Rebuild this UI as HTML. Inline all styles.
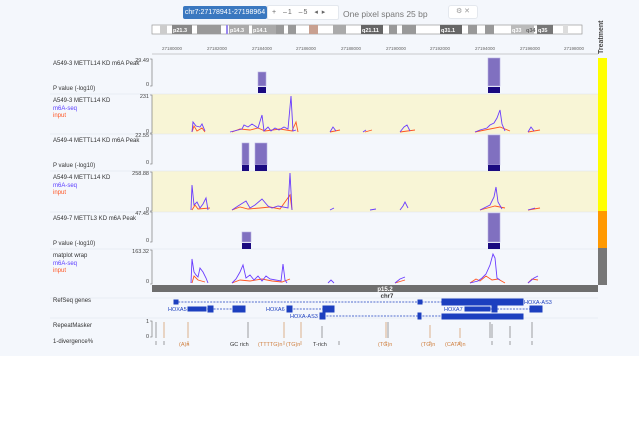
<!DOCTYPE html>
<html><head><meta charset="utf-8"><style>
*{margin:0;padding:0;box-sizing:border-box}
body{width:639px;height:426px;background:#fff;font-family:"Liberation Sans",sans-serif;position:relative;overflow:hidden}
#bg{position:absolute;left:0;top:0;width:639px;height:356px;background:#f4f7fc}
.t{position:absolute;font-size:6px;color:#333;white-space:nowrap}
svg{position:absolute;left:0;top:0}
</style></head><body>
<div id="bg"></div>
<div style="position:absolute;left:183px;top:6px;width:84px;height:13px;background:#3a78c0;border-radius:2px;color:#fff;font-size:7px;line-height:13px;text-align:center">chr7:27178941-27198964</div>
<div style="position:absolute;left:267px;top:5px;width:72px;height:15px;background:#fff;border:1px solid #e4e8ee;border-radius:2px;font-size:7px;color:#666;line-height:13px;padding-left:4px;letter-spacing:1px">+ &nbsp;–1 &nbsp;–5 &nbsp;◂ ▸</div>
<div class="t" style="left:343px;top:9px;font-size:8.5px;color:#777">One pixel spans 25 bp</div>
<div style="position:absolute;left:448px;top:5px;width:30px;height:14px;background:#fff;border:1px solid #e4e8ee;border-radius:3px;font-size:7px;color:#999;line-height:12px;text-align:center">⚙ ✕</div>
<div class="t" style="left:598px;top:16px;font-size:7px;font-weight:bold;color:#444;transform:rotate(-90deg);transform-origin:left top;top:54px">Treatment</div>
<svg width="639" height="426">
<!-- ideogram -->
<rect x="152" y="25" width="430" height="9" fill="#fff" stroke="#999" stroke-width="0.7"/>
<g fill="#999"><rect x="160" y="25" width="7" height="9" fill="#ccc"/><rect x="172" y="25" width="20" height="9" fill="#888"/><rect x="197" y="25" width="24" height="9"/><rect x="226" y="25" width="2" height="9" fill="#9988ee"/><rect x="229" y="25" width="20" height="9" fill="#aaa"/><rect x="252" y="25" width="24" height="9" fill="#aaa"/><rect x="276" y="25" width="8" height="9"/><rect x="288" y="25" width="8" height="9"/><rect x="309" y="25" width="9" height="9" fill="#c8a090"/><rect x="333" y="25" width="13" height="9" fill="#aaa"/><rect x="361" y="25" width="22" height="9" fill="#666"/><rect x="389" y="25" width="8" height="9"/><rect x="402" y="25" width="14" height="9"/><rect x="440" y="25" width="22" height="9" fill="#666"/><rect x="468" y="25" width="9" height="9"/><rect x="485" y="25" width="9" height="9"/><rect x="511" y="25" width="23" height="9" fill="#bbb"/><rect x="537" y="25" width="16" height="9" fill="#777"/><rect x="563" y="25" width="5" height="9" fill="#ddd"/></g>
<g font-size="5.5" fill="#fff" font-weight="bold" font-family="Liberation Sans"><text x="173" y="32">p21.3</text><text x="230" y="32">p14.3</text><text x="253" y="32">p14.1</text><text x="362" y="32">q21.11</text><text x="441" y="32">q31.1</text><text x="512" y="32">q33</text><text x="526" y="32" fill="#666">q34</text><text x="538" y="32">q35</text></g>
<!-- ruler -->
<line x1="152" y1="54" x2="598" y2="54" stroke="#999" stroke-width="0.6"/>
<g font-size="4.5" fill="#666" font-family="Liberation Sans">
<text x="162" y="50">27180000</text><text x="207" y="50">27182000</text><text x="252" y="50">27184000</text><text x="296" y="50">27186000</text><text x="341" y="50">27188000</text><text x="386" y="50">27190000</text><text x="430" y="50">27192000</text><text x="475" y="50">27194000</text><text x="520" y="50">27196000</text><text x="564" y="50">27198000</text></g>
<!-- rows -->
<rect x="152" y="94" width="446" height="40" fill="#f8f5d6"/>
<rect x="152" y="171" width="446" height="41" fill="#f8f5d6"/>
<g stroke="#dde2ea" stroke-width="0.6"><line x1="50" y1="94" x2="598" y2="94"/><line x1="50" y1="134" x2="598" y2="134"/><line x1="50" y1="171" x2="598" y2="171"/><line x1="50" y1="212" x2="598" y2="212"/><line x1="50" y1="249" x2="598" y2="249"/></g>
<!-- treatment -->
<rect x="598" y="58" width="9" height="153" fill="#ffff00"/><rect x="598" y="211" width="9" height="37" fill="#ff9900"/><rect x="598" y="248" width="9" height="37" fill="#777"/>
<!-- axes -->
<g stroke="#666" stroke-width="0.6" fill="none"><path d="M150 59h2v27h-2"/><path d="M150 95h2v38h-2"/><path d="M150 134h2v30h-2"/><path d="M150 172h2v39h-2"/><path d="M150 212h2v30h-2"/><path d="M150 250h2v34h-2"/></g>
<g font-size="5.5" fill="#444" font-family="Liberation Sans" text-anchor="end"><text x="149" y="62">29.49</text><text x="149" y="86">0</text><text x="149" y="98">231</text><text x="149" y="133">0</text><text x="149" y="137">22.55</text><text x="149" y="164">0</text><text x="149" y="175">258.88</text><text x="149" y="211">0</text><text x="149" y="215">47.45</text><text x="149" y="242">0</text><text x="149" y="253">163.32</text><text x="149" y="283">0</text></g>
<!-- peaks -->
<g fill="#8070c0" stroke="#b8b0e0" stroke-width="0.6"><rect x="258" y="72" width="8" height="14"/><rect x="488" y="58" width="12" height="28"/><rect x="242" y="143" width="7" height="22"/><rect x="255" y="143" width="12" height="22"/><rect x="488" y="135" width="12" height="30"/><rect x="242" y="232" width="9" height="10"/><rect x="488" y="213" width="12" height="29"/></g>
<g fill="#1a0a80"><rect x="258" y="87" width="8" height="6"/><rect x="488" y="87" width="12" height="6"/><rect x="242" y="165" width="7" height="6"/><rect x="255" y="165" width="12" height="6"/><rect x="488" y="165" width="12" height="6"/><rect x="242" y="243" width="9" height="6"/><rect x="488" y="243" width="12" height="6"/></g>
<!-- coverage -->
<g fill="none" stroke-width="0.9">
<path stroke="#ff5522" d="M192 132 194 126 197 131 202 128 205 132 M232 132 240 129 250 130 258 128 265 131 280 129 292 131 296 122 298 132 M330 132 340 130 M365 132 372 130 M400 132 415 130 M445 132 M475 132 490 129 500 127 510 131 M528 132 540 130"/>
<path stroke="#6a3cff" d="M192 132 193 122 196 126 200 127 202 124 205 131 M230 132 242 129 244 125 248 127 252 124 258 128 262 115 264 131 268 127 271 131 275 128 279 130 284 127 288 129 291 96 293 131 296 130 M330 132 333 127 336 131 M363 132 366 130 M390 132 M400 132 404 127 407 125 410 131 M452 132 M475 132 480 130 487 128 490 125 494 123 497 118 500 110 502 124 505 131 M528 132 531 127 534 131 M560 132"/>
<path stroke="#ff5522" d="M192 210 195 205 198 209 210 208 M232 210 240 207 248 209 260 208 270 207 280 209 290 195 292 210 M480 210 495 206 505 208 M528 210 540 208"/>
<path stroke="#6a3cff" d="M191 210 192 185 194 205 197 202 200 208 203 204 206 198 208 210 M232 210 238 206 246 201 250 208 255 205 262 199 268 206 272 208 278 206 288 208 290 173 292 210 M330 210 334 208 M370 210 376 209 M400 210 403 206 405 202 408 208 M480 210 490 205 494 197 496 187 498 202 502 209 M528 210 535 208"/>
<path stroke="#ff5522" d="M192 283 194 276 198 280 205 282 M232 283 240 280 250 281 262 279 272 281 282 282 290 279 M388 283 M395 283 405 280 M470 283 476 279 480 281 486 276 492 280 498 279 505 283 M528 283 532 279 538 280"/>
<path stroke="#6a3cff" d="M191 283 192 259 194 272 196 275 198 277 200 268 203 272 206 278 208 283 M232 283 236 279 240 272 243 265 246 278 250 275 254 280 258 276 262 281 266 276 270 279 281 281 283 264 285 280 287 283 M328 283 331 280 334 283 M395 283 400 279 405 277 M470 283 478 281 482 278 486 274 490 265 493 254 495 258 497 278 500 280 M528 283 534 278 538 276"/>
</g>
<!-- chromosome band -->
<rect x="152" y="285" width="446" height="7" fill="#6e6e6e"/>
<text x="385" y="291" font-size="6" fill="#fff" font-weight="bold" font-family="Liberation Sans" text-anchor="middle">p15.2</text>
<text x="387" y="298" font-size="6" fill="#333" font-weight="bold" font-family="Liberation Sans" text-anchor="middle">chr7</text>
<line x1="50" y1="298" x2="598" y2="298" stroke="#dde2ea" stroke-width="0.6"/>
<line x1="50" y1="318" x2="598" y2="318" stroke="#dde2ea" stroke-width="0.6"/>
<!-- genes -->
<g stroke="#1c3fbf" fill="#1c3fbf">
<line x1="175" y1="302" x2="523" y2="302" stroke-width="0.7" stroke-dasharray="2,1.2"/>
<rect x="174" y="300" width="4" height="4"/><rect x="418" y="300" width="4" height="4"/><rect x="442" y="299" width="81" height="6"/>
<line x1="188" y1="309" x2="245" y2="309" stroke-width="0.7" stroke-dasharray="2,1.2"/><rect x="188" y="307" width="18" height="4"/><rect x="208" y="306" width="5" height="6"/><rect x="233" y="306" width="12" height="6"/>
<line x1="287" y1="309" x2="335" y2="309" stroke-width="0.7" stroke-dasharray="2,1.2"/><rect x="287" y="306" width="5" height="6"/><rect x="323" y="306" width="11" height="6"/>
<line x1="465" y1="309" x2="542" y2="309" stroke-width="0.7" stroke-dasharray="2,1.2"/><rect x="465" y="307" width="25" height="4"/><rect x="492" y="306" width="5" height="6"/><rect x="530" y="306" width="12" height="6"/>
<line x1="320" y1="316" x2="523" y2="316" stroke-width="0.7" stroke-dasharray="2,1.2"/><rect x="320" y="313" width="5" height="6"/><rect x="418" y="313" width="3" height="6"/><rect x="442" y="314" width="81" height="5"/>
</g>
<g font-size="5.5" fill="#1c3fbf" font-family="Liberation Sans"><text x="524" y="304">HOXA-AS3</text><text x="168" y="311">HOXA5</text><text x="266" y="311">HOXA6</text><text x="444" y="311">HOXA7</text><text x="290" y="318">HOXA-AS3</text></g>
<!-- repeatmasker -->
<path d="M150 321h2v16h-2" stroke="#666" stroke-width="0.6" fill="none"/>
<g font-size="5.5" fill="#444" font-family="Liberation Sans" text-anchor="end"><text x="149" y="323">1</text><text x="149" y="338">0</text></g>
<g stroke-width="0.8">
<g stroke="#888"><path d="M156 322v16M248 322v16M322 326v12M388 322v16M490 322v16M492 324v14M510 326v12M532 322v16M156 341v4M164 341v4M339 341v4M492 341v4M510 341v4M532 341v4"/></g>
<g stroke="#d8a070"><path d="M164 322v16M188 322v16M284 322v16M301 322v16M386 322v16M430 325v13M460 328v10M188 341v4M284 341v4M301 341v4M386 341v4M430 341v4M460 341v4"/></g>
</g>
<g font-size="5.5" font-family="Liberation Sans"><text x="179" y="346" fill="#d08040">(A)n</text><text x="230" y="346" fill="#333">GC rich</text><text x="258" y="346" fill="#d08040">(TTTTG)n</text><text x="286" y="346" fill="#d08040">(TG)n</text><text x="313" y="346" fill="#333">T-rich</text><text x="378" y="346" fill="#d08040">(TG)n</text><text x="421" y="346" fill="#d08040">(TG)n</text><text x="445" y="346" fill="#d08040">(CATA)n</text></g>
</svg>
<div class="t" style="left:53px;top:61px">A549-3 METTL14 KD m6A Peak</div>
<div class="t" style="left:53px;top:86px">P value (-log10)</div>
<div class="t" style="left:53px;top:98px">A549-3 METTL14 KD</div>
<div class="t" style="left:53px;top:106px;color:#5a3cff">m6A-seq</div>
<div class="t" style="left:53px;top:113px;color:#ff5522">input</div>
<div class="t" style="left:53px;top:138px">A549-4 METTL14 KD m6A Peak</div>
<div class="t" style="left:53px;top:163px">P value (-log10)</div>
<div class="t" style="left:53px;top:175px">A549-4 METTL14 KD</div>
<div class="t" style="left:53px;top:183px;color:#5a3cff">m6A-seq</div>
<div class="t" style="left:53px;top:190px;color:#ff5522">input</div>
<div class="t" style="left:53px;top:216px">A549-7 METTL3 KD m6A Peak</div>
<div class="t" style="left:53px;top:241px">P value (-log10)</div>
<div class="t" style="left:53px;top:253px">matplot wrap</div>
<div class="t" style="left:53px;top:261px;color:#5a3cff">m6A-seq</div>
<div class="t" style="left:53px;top:268px;color:#ff5522">input</div>
<div class="t" style="left:53px;top:298px">RefSeq genes</div>
<div class="t" style="left:53px;top:323px">RepeatMasker</div>
<div class="t" style="left:53px;top:339px">1-divergence%</div>
</body></html>
